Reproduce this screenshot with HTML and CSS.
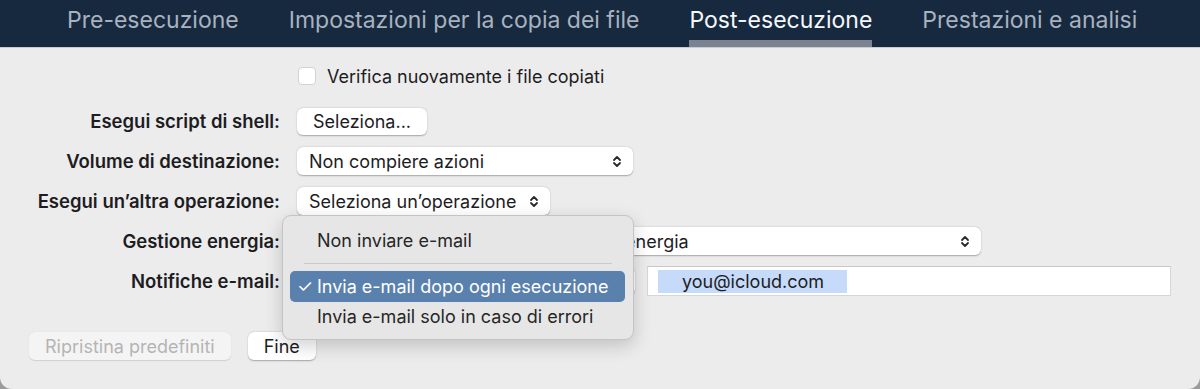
FILE: index.html
```html
<!DOCTYPE html>
<html lang="it">
<head>
    <meta charset="UTF-8">
    <title>Post-esecuzione</title>
    <link rel="stylesheet" href="styles.css">
</head>
<body>
    <div class="window">
        <nav class="tabs">
            <span class="tab">Pre-esecuzione</span>
            <span class="tab">Impostazioni per la copia dei file</span>
            <span class="tab active">Post-esecuzione</span>
            <span class="tab">Prestazioni e analisi</span>
        </nav>

        <div class="panel">
            <div class="form">
                <div class="row first">
                    <span class="label"></span>
                    <label class="check"><span class="box"></span>Verifica nuovamente i file copiati</label>
                </div>
                <div class="row gap">
                    <span class="label">Esegui script di shell:</span>
                    <button class="btn">Seleziona...</button>
                </div>
                <div class="row">
                    <span class="label">Volume di destinazione:</span>
                    <div class="select w-volume">
                        <span>Non compiere azioni</span>
                        <svg class="chev" viewBox="0 0 10 14"><path d="M2 5.5 L5 2.5 L8 5.5 M2 8.5 L5 11.5 L8 8.5"/></svg>
                    </div>
                </div>
                <div class="row">
                    <span class="label">Esegui un’altra operazione:</span>
                    <div class="select w-op">
                        <span>Seleziona un’operazione</span>
                        <svg class="chev" viewBox="0 0 10 14"><path d="M2 5.5 L5 2.5 L8 5.5 M2 8.5 L5 11.5 L8 8.5"/></svg>
                    </div>
                </div>
                <div class="row">
                    <span class="label">Gestione energia:</span>
                    <div class="select w-energy">
                        <span>Mantieni le impostazioni di risparmio energia</span>
                        <svg class="chev" viewBox="0 0 10 14"><path d="M2 5.5 L5 2.5 L8 5.5 M2 8.5 L5 11.5 L8 8.5"/></svg>
                    </div>
                </div>
                <div class="row">
                    <span class="label">Notifiche e-mail:</span>
                    <div class="mail">
                        <div class="select w-mail"></div>
                        <div class="field"><span class="sel">you@icloud.com</span></div>
                    </div>
                </div>
            </div>

            <div class="footer">
                <button class="btn disabled">Ripristina predefiniti</button>
                <button class="btn">Fine</button>
            </div>

            <!-- popup menu opened over the e-mail option -->
            <div class="menu">
                <div class="item">Non inviare e-mail</div>
                <div class="sep"></div>
                <div class="item on"><span class="tick">✓</span>Invia e-mail dopo ogni esecuzione</div>
                <div class="item">Invia e-mail solo in caso di errori</div>
            </div>
        </div>
    </div>
</body>
</html>
```

FILE: styles.css
```css
html, body {
    margin: 0;
    padding: 0;
    height: 100%;
}
body {
    background-color: #9c9c9c;
    font-family: 'Inter', 'Liberation Sans', sans-serif;
    color: #1d1d1f;
}
.window {
    height: 389px;
    background-color: #ececec;
    border-radius: 0 0 12px 12px;
    overflow: hidden;
    display: flex;
    flex-direction: column;
}
.tabs {
    height: 47px;
    background-color: #17293f;
    border-bottom: 1px solid #c9cdd3;
    display: flex;
    padding-left: 67px;
    gap: 50px;
}
.tab {
    font-size: 23px;
    color: #a9b2bf;
    line-height: 40px;
    border-bottom: 7px solid transparent;
}
.tab.active {
    color: #f5f7f9;
    border-bottom-color: #7b8391;
}
.panel {
    flex: 1;
    position: relative;
}
.form {
    padding-top: 8px;
}
.row {
    display: grid;
    grid-template-columns: 280px 1fr;
    column-gap: 17px;
    align-items: center;
    height: 40px;
}
.row.gap {
    margin-top: 5px;
}
.label {
    text-align: right;
    font-weight: 600;
    font-size: 18.5px;
}
.check {
    display: flex;
    align-items: center;
    font-size: 18px;
    gap: 11px;
    margin-left: 1px;
}
.box {
    width: 16px;
    height: 16px;
    border-radius: 4px;
    background-color: #fff;
    border: 1px solid #d3d3d3;
}
.btn {
    font-family: inherit;
    font-size: 18px;
    color: #1d1d1f;
    background-color: #fff;
    border: none;
    border-radius: 6px;
    height: 27px;
    padding: 0 16px;
    box-shadow: 0 0.5px 1.5px rgba(0, 0, 0, 0.3);
    justify-self: start;
}
.btn.disabled {
    background-color: #f4f4f4;
    color: #b4b4b4;
    box-shadow: 0 0.5px 1px rgba(0, 0, 0, 0.12);
}
.select {
    height: 28px;
    background-color: #fff;
    border-radius: 6px;
    box-shadow: 0 0.5px 1.5px rgba(0, 0, 0, 0.3);
    display: flex;
    align-items: center;
    justify-content: space-between;
    padding: 0 11px 0 12px;
    font-size: 18px;
    box-sizing: border-box;
    white-space: nowrap;
    overflow: hidden;
}
.chev {
    width: 10px;
    height: 15px;
    flex: none;
}
.chev path {
    fill: none;
    stroke: #2a2a2a;
    stroke-width: 1.8;
    stroke-linecap: round;
    stroke-linejoin: round;
}
.w-volume { width: 336px; }
.w-op { width: 253px; }
.w-energy { width: 684px; }
.w-mail { width: 338px; }
.mail {
    display: flex;
    align-items: center;
    gap: 12px;
}
.field {
    width: 524px;
    height: 30px;
    box-sizing: border-box;
    background-color: #fff;
    border: 1px solid #d6d6d6;
    border-top-color: #c8c8c8;
    display: flex;
    align-items: center;
    padding-left: 10px;
    font-size: 18px;
}
.sel {
    background-color: #c6dafa;
    padding: 1px 0 1px 24px;
    width: 165px;
}
.footer {
    display: flex;
    gap: 17px;
    padding: 31px 0 0 29px;
}
.footer .btn {
    height: 28px;
}
.menu {
    position: absolute;
    left: 282px;
    top: 167px;
    width: 352px;
    box-sizing: border-box;
    padding: 10px 8px 7px 7px;
    background-color: #e6e6e6;
    border: 1px solid #c4c4c4;
    border-radius: 9px;
    box-shadow: 0 6px 18px rgba(0, 0, 0, 0.18);
}
.item {
    height: 30px;
    line-height: 30px;
    padding-left: 27px;
    font-size: 18px;
    color: #262626;
    border-radius: 5px;
    position: relative;
}
.item.on {
    height: 31px;
    line-height: 31px;
    background-color: #5a81ad;
    color: #fff;
}
.tick {
    position: absolute;
    left: 7px;
}
.sep {
    height: 1px;
    background-color: #cacaca;
    margin: 7px 13px 7px 14px;
}
```
